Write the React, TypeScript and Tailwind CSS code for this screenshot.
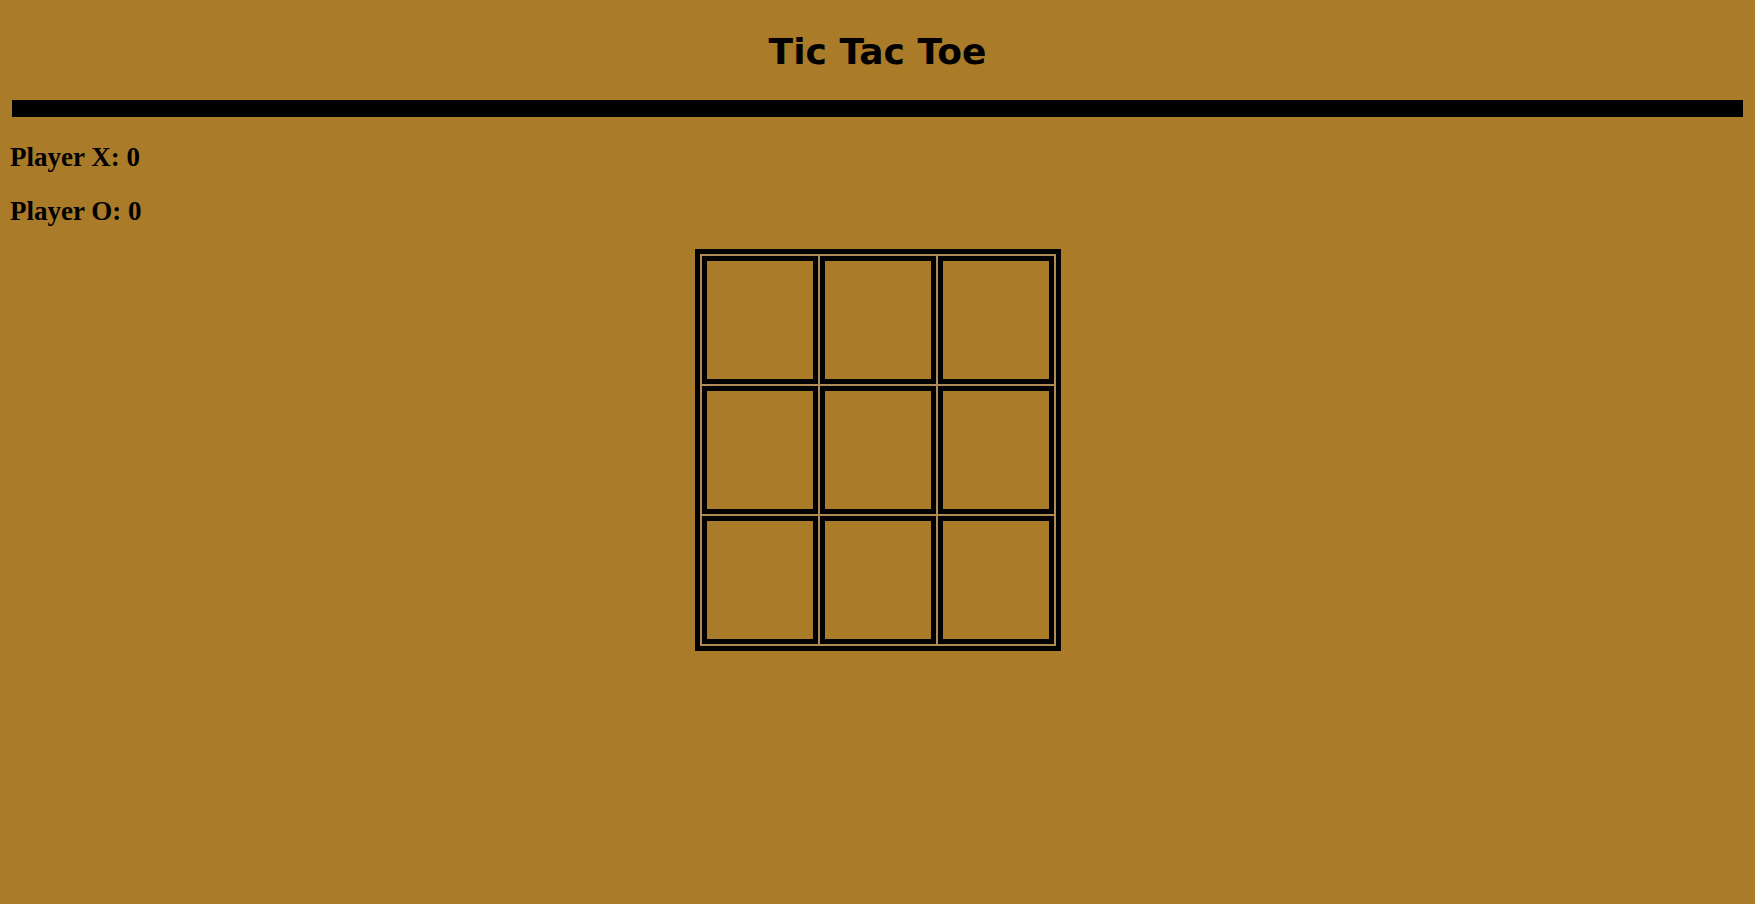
export default function App() {
    return (
        <div className="min-h-screen w-full bg-[#aa7c29] font-['Liberation_Serif',serif] text-black">
            <h1 className="pt-[30px] text-center text-[36px] leading-[44px] font-bold font-['Comic_Sans_MS','DejaVu_Sans',sans-serif]">
                Tic Tac Toe
            </h1>
            <div className="mx-[12px] mt-[26px] h-[17px] bg-black"></div>
            <div className="flex flex-col gap-[23px] pl-[10px] mt-[25px]">
                <h2 className="text-[27px] leading-[31px] font-bold">Player X: 0</h2>
                <h2 className="text-[27px] leading-[31px] font-bold">Player O: 0</h2>
            </div>
            <div className="flex justify-center mt-[22px]">
                <div className="grid grid-cols-3 gap-[2px] p-[2px] border-[5px] border-black bg-[#b08b55]">
                    {Array.from({ length: 9 }).map((_, i) => (
                        <button
                            key={i}
                            className="w-[116px] h-[128px] border-[5px] border-black bg-[#aa7c29]"
                        ></button>
                    ))}
                </div>
            </div>
        </div>
    )
}
